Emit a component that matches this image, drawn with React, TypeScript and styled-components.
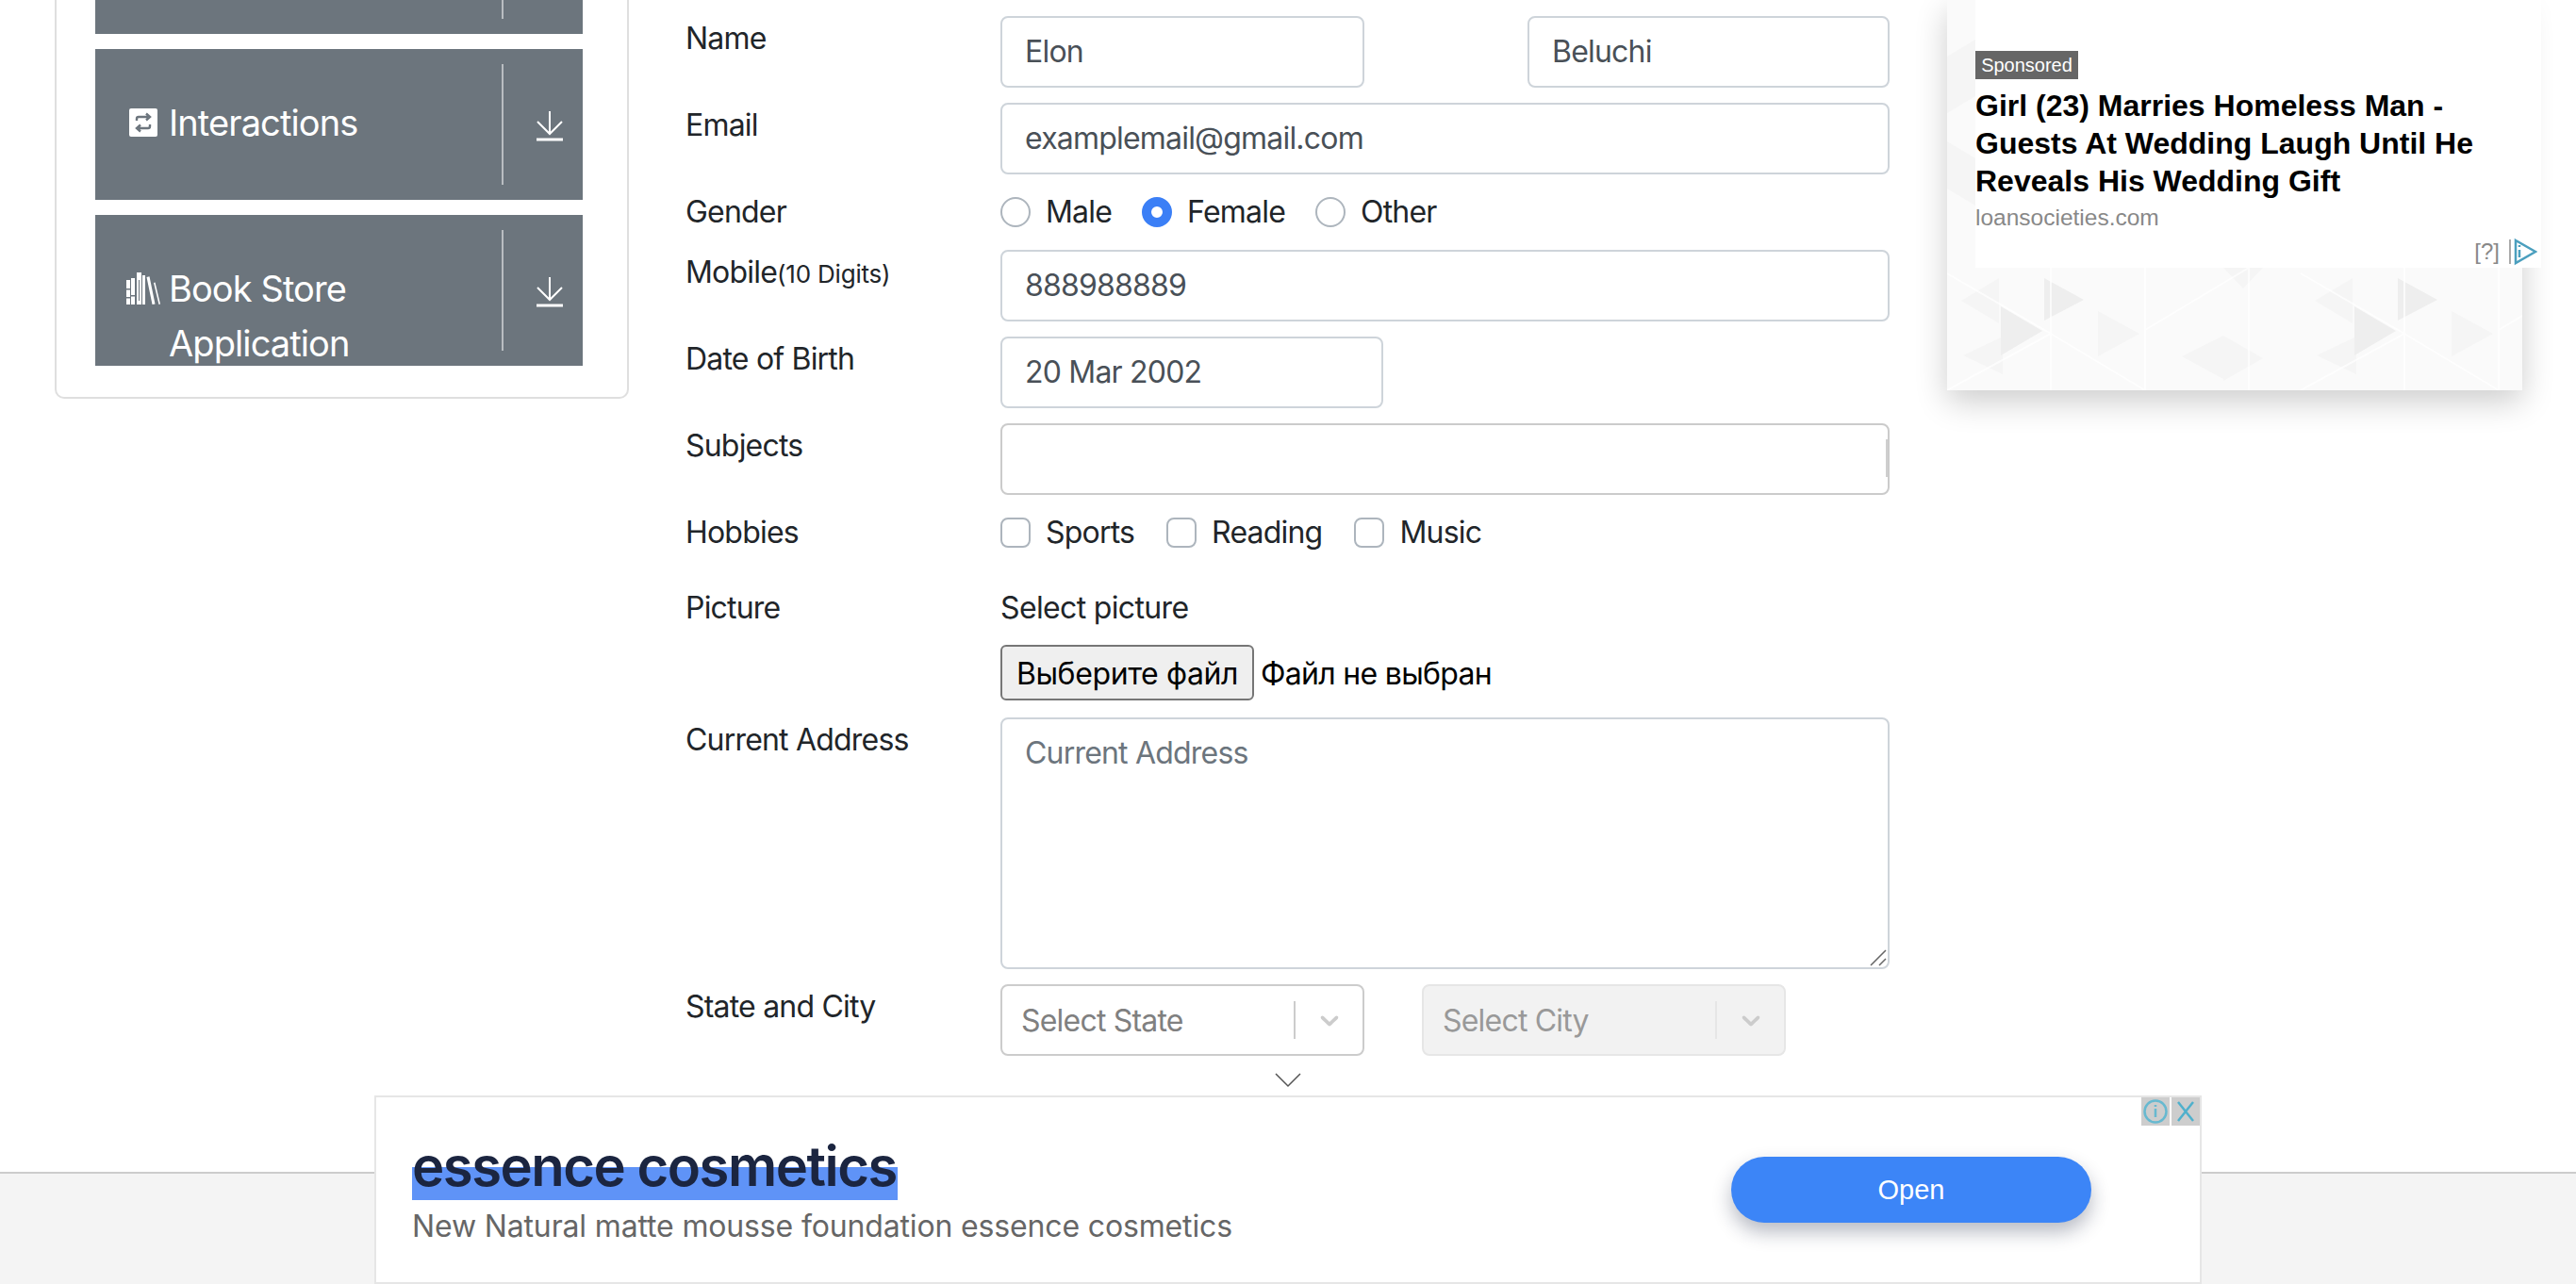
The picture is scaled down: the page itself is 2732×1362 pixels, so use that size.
import React from 'react';
import styled, { createGlobalStyle } from 'styled-components';

const GlobalStyle = createGlobalStyle`
  html, body {
    margin: 0;
    padding: 0;
    height: 100%;
    background: #fff;
    overflow: hidden;
  }
  * {
    box-sizing: border-box;
  }
`;

const Page = styled.div`
  display: flex;
  flex-direction: column;
  height: 100vh;
  font-family: Inter, 'Noto Sans', sans-serif;
  font-size: 32px;
  letter-spacing: -0.8px;
  color: #212529;
`;

const Main = styled.main`
  flex: 1;
  min-height: 0;
  display: flex;
  align-items: flex-start;
  padding-left: 58px;
  overflow: hidden;
`;

const SideCard = styled.aside`
  width: 609px;
  flex-shrink: 0;
  display: flex;
  flex-direction: column;
  gap: 16px;
  padding: 0 47px 33px 41px;
  border: 2px solid #dfdfdf;
  border-top: 0;
  border-radius: 0 0 10px 10px;
`;

const GroupBar = styled.div<{ $cut?: boolean }>`
  display: flex;
  height: ${p => (p.$cut ? '36px' : '160px')};
  align-items: ${p => (p.$cut ? 'flex-start' : 'stretch')};
  background: #6c757d;
  color: #fff;
  font-size: 38px;
  letter-spacing: -0.9px;
  line-height: 58px;
`;

const GroupTitle = styled.div`
  flex: 1;
  display: flex;
  gap: 9px;
  padding: 49px 0 0 33px;
`;

const GroupIcon = styled.span`
  width: 36px;
  height: 36px;
  flex-shrink: 0;
  margin-top: 11px;
  display: flex;
  align-items: center;
  justify-content: center;
`;

const GroupDivider = styled.div<{ $cut?: boolean }>`
  width: 2px;
  height: ${p => (p.$cut ? '20px' : '128px')};
  margin-top: ${p => (p.$cut ? '0' : '16px')};
  background: #b9bdc1;
`;

const GroupArrow = styled.div`
  width: 84px;
  display: flex;
  align-items: center;
  justify-content: center;
  padding: 3px 0 0 14px;
`;

const FormColumn = styled.form`
  width: 1277px;
  margin-left: 60px;
  flex-shrink: 0;
  padding-top: 17px;
`;

const Row = styled.div<{ $gap?: number }>`
  display: grid;
  grid-template-columns: 334px 1fr;
  margin-bottom: ${p => p.$gap ?? 16}px;
`;

const Label = styled.label`
  line-height: 48px;
`;

const Small = styled.span`
  font-size: 26px;
  letter-spacing: -0.2px;
`;

const SplitFields = styled.div`
  display: flex;
  justify-content: space-between;
`;

const Field = styled.div<{ $width?: number; $dark?: boolean }>`
  width: ${p => (p.$width ? `${p.$width}px` : '100%')};
  height: 76px;
  position: relative;
  padding: 0 24px;
  border: 2px solid ${p => (p.$dark ? '#cbcbcb' : '#ced4da')};
  border-radius: 8px;
  line-height: 72px;
  color: #495057;
`;

const SubjectsCaret = styled.span`
  position: absolute;
  right: 0;
  top: 15px;
  width: 2px;
  height: 40px;
  background: #cfcfcf;
`;

const AddressBox = styled.div`
  position: relative;
  height: 267px;
  padding: 14px 24px 0;
  border: 2px solid #ced4da;
  border-radius: 8px;
  line-height: 44px;
  color: #6c757d;
`;

const ResizeGrip = styled.svg`
  position: absolute;
  right: 1px;
  bottom: 1px;
`;

const Options = styled.div<{ $spread?: number }>`
  display: flex;
  align-items: center;
  gap: ${p => p.$spread ?? 32}px;
  height: 48px;
`;

const Option = styled.span`
  display: flex;
  align-items: center;
  gap: 16px;
  line-height: 48px;
`;

const Radio = styled.span<{ $on?: boolean }>`
  width: 32px;
  height: 32px;
  border-radius: 50%;
  border: ${p => (p.$on ? '10px solid #3b7ff6' : '2px solid #adb5bd')};
  background: #fff;
`;

const Check = styled.span`
  width: 32px;
  height: 32px;
  border-radius: 8px;
  border: 2px solid #adb5bd;
  background: #fff;
`;

const PictureBlock = styled.div`
  display: flex;
  flex-direction: column;
  align-items: flex-start;
  gap: 15px;
`;

const PictureLabel = styled.div`
  line-height: 48px;
  letter-spacing: -0.65px;
`;

const FileLine = styled.div`
  display: flex;
  align-items: center;
  gap: 7px;
  color: #000;
`;

const FileName = styled.span`
  padding-top: 2px;
  letter-spacing: -0.7px;
`;

const FileButton = styled.button`
  width: 269px;
  height: 59px;
  padding: 2px 0 0;
  font: inherit;
  letter-spacing: -0.4px;
  color: #000;
  background: #efefef;
  border: 2px solid #767676;
  border-radius: 6px;
`;

const SelectRow = styled.div`
  display: flex;
  gap: 61px;
`;

const Select = styled.div<{ $off?: boolean }>`
  width: 386px;
  height: 76px;
  display: flex;
  align-items: center;
  padding-left: 20px;
  border: 2px solid ${p => (p.$off ? '#e6e6e6' : '#cccccc')};
  border-radius: 8px;
  background: ${p => (p.$off ? '#f2f2f2' : '#fff')};
  color: ${p => (p.$off ? '#999' : '#808080')};
`;

const SelectText = styled.span`
  flex: 1;
`;

const SelectLine = styled.span<{ $off?: boolean }>`
  width: 2px;
  height: 40px;
  background: ${p => (p.$off ? '#e6e6e6' : '#ccc')};
`;

const SelectArrow = styled.span`
  width: 71px;
  display: flex;
  justify-content: center;
  color: #ccc;
`;

const SideAd = styled.div`
  position: relative;
  width: 610px;
  height: 414px;
  margin-left: 61px;
  flex-shrink: 0;
  background: #fafafa;
  box-shadow: 0 12px 32px rgba(0, 0, 0, 0.2);
`;

const AdPattern = styled.svg`
  position: absolute;
  left: 0;
  top: 0;
`;

const AdBody = styled.div`
  position: relative;
  width: 600px;
  height: 284px;
  margin-left: 30px;
  padding-top: 54px;
  background: #fff;
  font-family: 'Liberation Sans', Arial, sans-serif;
  letter-spacing: 0;
`;

const Sponsored = styled.span`
  display: block;
  width: 109px;
  height: 30px;
  background: #666;
  color: #fff;
  font-size: 20px;
  line-height: 30px;
  text-align: center;
`;

const AdTitle = styled.div`
  width: 560px;
  margin-top: 8px;
  color: #000;
  font-size: 32px;
  font-weight: 700;
  line-height: 40px;
`;

const AdSite = styled.div`
  margin-top: 3px;
  color: #888;
  font-size: 24.5px;
  line-height: 32px;
`;

const AdMark = styled.div`
  position: absolute;
  right: 4px;
  bottom: 2px;
  display: flex;
  align-items: center;
  gap: 10px;
  color: #888;
  font-size: 24px;
  line-height: 30px;
`;

const Footer = styled.footer`
  height: 119px;
  flex-shrink: 0;
  border-top: 2px solid #cccccc;
  background: #f4f4f4;
`;

const AdBar = styled.div`
  position: fixed;
  left: 397px;
  bottom: 0;
  width: 1938px;
  height: 200px;
  display: flex;
  align-items: center;
  justify-content: space-between;
  padding: 0 115px 0 38px;
  border: 2px solid #e6e6e6;
  background: #fff;
`;

const CollapseHandle = styled.svg`
  position: absolute;
  left: 953px;
  top: -26px;
`;

const AdCopy = styled.div`
  padding-top: 8px;
`;

const AdHeadline = styled.div`
  display: inline-block;
  height: 64px;
  padding-right: 1px;
  color: #1b2540;
  font-size: 58px;
  font-weight: 600;
  letter-spacing: -1.5px;
  line-height: 56px;
  background: linear-gradient(transparent 29px, #5f93f7 29px);
`;

const AdSub = styled.div`
  margin-top: 6px;
  color: #666;
  font-size: 32px;
  letter-spacing: -0.15px;
  line-height: 44px;
`;

const OpenButton = styled.div`
  width: 382px;
  height: 70px;
  display: flex;
  align-items: center;
  justify-content: center;
  border-radius: 35px;
  background: #3c85f7;
  box-shadow: 0 10px 20px rgba(20, 30, 60, 0.3);
  color: #fff;
  font-family: 'Liberation Sans', Arial, sans-serif;
  font-size: 29px;
  letter-spacing: 0;
`;

const AdControls = styled.div`
  position: absolute;
  top: 0;
  right: 0;
  display: flex;
  gap: 2px;
`;

const AdControl = styled.span`
  width: 30px;
  height: 30px;
  display: flex;
  background: #cdcdcd;
`;

const DownloadIcon = () => (
  <svg width="30" height="32" viewBox="0 0 30 32" fill="none" stroke="#fff">
    <path d="M15 0v23M2 11l13 13 13-13" strokeWidth="2" />
    <path d="M1 30h28" strokeWidth="3" />
  </svg>
);

const RepeatIcon = () => (
  <svg width="30" height="30" viewBox="0 0 30 30">
    <rect width="30" height="30" rx="2" fill="#fff" />
    <path
      d="M8 13v-2a2 2 0 0 1 2-2h10M18 5.5 22 9l-4 3.5M22 17v2a2 2 0 0 1-2 2H10M12 17.5 8 21l4 3.5"
      fill="none"
      stroke="#6c757d"
      strokeWidth="2.4"
    />
  </svg>
);

const BooksIcon = () => (
  <svg width="36" height="34" viewBox="0 0 36 34" fill="#fff">
    <path d="M0 8h4v26H0zM5 6h4v28H5zM11 0h5v34h-5zM17 3h3v31h-3z" />
    <path d="M0 17h4v1.5H0zM0 26h4v1.5H0zM5 24h4v1.5H5zM13 8h1v22h-1z" fill="#6c757d" />
    <path d="m21.5 5 3-.8 6 29.3-3 .5zM29 11l1.5-.5 5.5 23-1.500.5z" />
  </svg>
);

const SelectChevron = () => (
  <svg width="32" height="32" viewBox="0 0 20 20" fill="currentColor">
    <path d="M4.516 7.548c0.436-0.446 1.043-0.481 1.576 0l3.908 3.747 3.908-3.747c0.533-0.481 1.141-0.446 1.574 0 0.436 0.445 0.408 1.197 0 1.615-0.406 0.418-4.695 4.502-4.695 4.502-0.217 0.223-0.502 0.335-0.787 0.335s-0.57-0.112-0.789-0.335c0 0-4.287-4.084-4.695-4.502s-0.436-1.17 0-1.615z" />
  </svg>
);

// the grey play shapes repeat every 375px across the ad background
const patternShapes = [0, 375].map(x => (
  <g key={x} transform={`translate(${x} 0)`}>
    <path d="M59 397v-40l-42 20zM249 378l44-22v46zM293 356l42 24-42 24zM293 284h42l-21 22zM160 330l44 24-44 24zM15 319l40-24v48z" fill="#f5f5f5" />
    <path d="M103 295v45l42-22zM57 325v52l44-26z" fill="#eeeeee" />
    <path d="M0 290l110 64-110 60M110 284v130M110 354l100 60M210 284v130M210 350l110-66M320 284v130" stroke="#fff" strokeOpacity="0.7" strokeWidth="2" fill="none" />
  </g>
));

const InfoGlyph = () => (
  <svg width="30" height="30" viewBox="0 0 30 30" fill="none" stroke="#67b9d0">
    <circle cx="15" cy="15" r="11.5" strokeWidth="2.5" />
    <path d="M15 12v9M15 8v2" strokeWidth="2.5" />
  </svg>
);

const CloseGlyph = () => (
  <svg width="30" height="30" viewBox="0 0 30 30" fill="none" stroke="#4fb0cc" strokeWidth="2.5">
    <path d="M7 5l16 20M23 5 7 25" />
  </svg>
);

const AdChoiceGlyph = () => (
  <svg width="30" height="30" viewBox="0 0 30 30" fill="none">
    <path d="M1 2v26" stroke="#aaa" strokeWidth="2" />
    <path d="M7 3 28 15 7 27z" stroke="#4b9fbe" strokeWidth="2.5" />
    <path d="M11 13v8M11 8v2" stroke="#4b9fbe" strokeWidth="2.5" />
  </svg>
);

export default function App() {
  return (
    <>
      <GlobalStyle />
      <Page>
        <Main>
          <SideCard>
            <GroupBar $cut>
              <GroupTitle />
              <GroupDivider $cut />
              <GroupArrow />
            </GroupBar>
            <GroupBar>
              <GroupTitle>
                <GroupIcon><RepeatIcon /></GroupIcon>
                <span>Interactions</span>
              </GroupTitle>
              <GroupDivider />
              <GroupArrow><DownloadIcon /></GroupArrow>
            </GroupBar>
            <GroupBar>
              <GroupTitle>
                <GroupIcon><BooksIcon /></GroupIcon>
                <span>Book Store Application</span>
              </GroupTitle>
              <GroupDivider />
              <GroupArrow><DownloadIcon /></GroupArrow>
            </GroupBar>
          </SideCard>

          <FormColumn>
            <Row>
              <Label>Name</Label>
              <SplitFields>
                <Field $width={386}>Elon</Field>
                <Field $width={384}>Beluchi</Field>
              </SplitFields>
            </Row>
            <Row>
              <Label>Email</Label>
              <Field>examplemail@gmail.com</Field>
            </Row>
            <Row>
              <Label>Gender</Label>
              <Options>
                <Option><Radio />Male</Option>
                <Option><Radio $on />Female</Option>
                <Option><Radio />Other</Option>
              </Options>
            </Row>
            <Row>
              <Label>Mobile<Small>(10 Digits)</Small></Label>
              <Field>888988889</Field>
            </Row>
            <Row>
              <Label>Date of Birth</Label>
              <Field $width={406}>20 Mar 2002</Field>
            </Row>
            <Row>
              <Label>Subjects</Label>
              <Field $dark><SubjectsCaret /></Field>
            </Row>
            <Row $gap={32}>
              <Label>Hobbies</Label>
              <Options $spread={34}>
                <Option><Check />Sports</Option>
                <Option><Check />Reading</Option>
                <Option><Check />Music</Option>
              </Options>
            </Row>
            <Row $gap={18}>
              <Label>Picture</Label>
              <PictureBlock>
                <PictureLabel>Select picture</PictureLabel>
                <FileLine>
                  <FileButton type="button">Выберите файл</FileButton>
                  <FileName>Файл не выбран</FileName>
                </FileLine>
              </PictureBlock>
            </Row>
            <Row>
              <Label>Current Address</Label>
              <AddressBox>
                Current Address
                <ResizeGrip width="20" height="20" viewBox="0 0 20 20" fill="none" stroke="#666" strokeWidth="1.5">
                  <path d="M3 19 19 3M12 19l7-7" />
                </ResizeGrip>
              </AddressBox>
            </Row>
            <Row>
              <Label>State and City</Label>
              <SelectRow>
                <Select>
                  <SelectText>Select State</SelectText>
                  <SelectLine />
                  <SelectArrow><SelectChevron /></SelectArrow>
                </Select>
                <Select $off>
                  <SelectText>Select City</SelectText>
                  <SelectLine $off />
                  <SelectArrow><SelectChevron /></SelectArrow>
                </Select>
              </SelectRow>
            </Row>
          </FormColumn>

          <SideAd>
            <AdPattern width="610" height="414" viewBox="0 0 610 414">
              <path d="M0 60l30-18v60l-30 18zM0 150l30 18v50l-30-18z" fill="#f5f5f5" />
              {patternShapes}
            </AdPattern>
            <AdBody>
              <Sponsored>Sponsored</Sponsored>
              <AdTitle>Girl (23) Marries Homeless Man - Guests At Wedding Laugh Until He Reveals His Wedding Gift</AdTitle>
              <AdSite>loansocieties.com</AdSite>
              <AdMark>
                <span>[?]</span>
                <AdChoiceGlyph />
              </AdMark>
            </AdBody>
          </SideAd>
        </Main>
        <Footer />
        <AdBar>
          <CollapseHandle width="28" height="16" viewBox="0 0 28 16" fill="none" stroke="#555" strokeWidth="1.5">
            <path d="M1 1l13 13L27 1" />
          </CollapseHandle>
          <AdControls>
            <AdControl><InfoGlyph /></AdControl>
            <AdControl><CloseGlyph /></AdControl>
          </AdControls>
          <AdCopy>
            <AdHeadline>essence cosmetics</AdHeadline>
            <AdSub>New Natural matte mousse foundation essence cosmetics</AdSub>
          </AdCopy>
          <OpenButton>Open</OpenButton>
        </AdBar>
      </Page>
    </>
  );
}
